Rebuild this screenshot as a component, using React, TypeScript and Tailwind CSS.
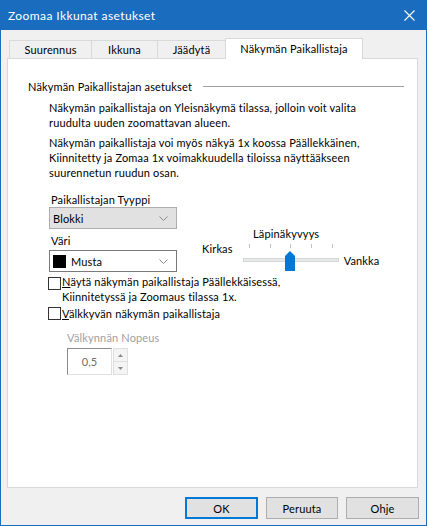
import React from "react";

function Tab({ label, w, selected }: { label: string; w: string; selected?: boolean }) {
  if (selected) {
    return (
      <div className={`${w} h-[21px] relative z-10 bg-white border border-b-0 border-[#d9d9d9] flex items-center justify-center pb-[1px]`}>
        {label}
      </div>
    );
  }
  return (
    <div className={`${w} h-[18px] mt-[2px] bg-[#f0f0f0] border-t border-l border-[#d9d9d9] flex items-center justify-center`}>
      {label}
    </div>
  );
}

function Checkbox() {
  return <div className="w-[13px] h-[13px] border border-[#333333] bg-white shrink-0" />;
}

function Chevron() {
  return (
    <svg width="9" height="5" viewBox="0 0 9 5">
      <path d="M0.5 0.5 L4.5 4.5 L8.5 0.5" stroke="#8a8a8a" fill="none" strokeWidth="1" />
    </svg>
  );
}

export default function App() {
  return (
    <div className="w-[427px] h-[526px] flex flex-col bg-[#1a6cbe] p-px font-['Lato',sans-serif] text-[11px] tracking-[0.15px] leading-[15px] text-black overflow-hidden">
      <div className="h-[29px] shrink-0 flex items-center justify-between text-white pl-[7px] pr-[10px]">
        <span className="text-[12px] tracking-[0.4px]">Zoomaa Ikkunat asetukset</span>
        <svg width="11" height="11" viewBox="0 0 11 11" className="mr-[1px]">
          <path d="M0.5 0.5 L10.5 10.5 M10.5 0.5 L0.5 10.5" stroke="white" strokeWidth="1.1" />
        </svg>
      </div>
      <div className="h-[495px] bg-[#f0f0f0] flex flex-col pl-[6px] pr-[8px] pt-[8px]">
        <div className="h-[20px] flex items-start pl-[2px] shrink-0">
          <Tab label="Suurennus" w="w-[82px]" />
          <Tab label="Ikkuna" w="w-[66px]" />
          <Tab label="Jäädytä" w="w-[68px]" />
          <Tab label="Näkymän Paikallistaja" w="w-[138px]" selected />
        </div>
        <div className="h-[430px] shrink-0 bg-white border border-[#d9d9d9] pt-[20px] pl-[20px] pr-[13px]">
          <div className="flex items-center">
            <span className="whitespace-nowrap">Näkymän Paikallistajan asetukset</span>
            <div className="flex-1 ml-[11px] h-[2px] border-t border-[#a0a0a0] border-b border-b-white" />
          </div>
          <div className="pl-[21px]">
            <p className="mt-[6px] whitespace-nowrap">
              Näkymän paikallistaja on Yleisnäkymä tilassa, jolloin voit valita
              <br />
              ruudulta uuden zoomattavan alueen.
            </p>
            <p className="mt-[5px] whitespace-nowrap">
              Näkymän paikallistaja voi myös näkyä 1x koossa Päällekkäinen,
              <br />
              Kiinnitetty ja Zomaa 1x voimakkuudella tiloissa näyttääkseen
              <br />
              suurennetun ruudun osan.
            </p>
            <div className="flex items-start mt-[12px]">
              <div className="w-[128px] flex flex-col">
                <span className="pl-[2px]">Paikallistajan Tyyppi</span>
                <div className="h-[22px] bg-[#e1e1e1] border border-[#adadad] flex items-center justify-between pl-[3px] pr-[8px]">
                  <span>Blokki</span>
                  <Chevron />
                </div>
                <span className="mt-[4px] pl-[2px]">Väri</span>
                <div className="mt-[2px] h-[22px] bg-white border border-[#7a7a7a] flex items-center justify-between pl-[3px] pr-[8px]">
                  <div className="flex items-center">
                    <div className="w-[13px] h-[13px] bg-black" />
                    <span className="ml-[5px]">Musta</span>
                  </div>
                  <Chevron />
                </div>
              </div>
              <div className="ml-[25px] mt-[34px] flex flex-col">
                <span className="ml-[51px]">Läpinäkyvyys</span>
                <div className="flex items-start">
                  <span>Kirkas</span>
                  <svg width="100" height="30" viewBox="0 0 100 30" className="ml-[8px] mt-[1px]">
                    {[8, 29, 49, 70, 91].map((x) => (
                      <line key={x} x1={x + 0.5} y1="2" x2={x + 0.5} y2="6" stroke="#c4c4c4" strokeWidth="1" />
                    ))}
                    <rect x="2.5" y="16.5" width="95" height="3" fill="#e7eaea" stroke="#d6d6d6" />
                    <path d="M44 29 L44 14 L49 9 L54 14 L54 29 Z" fill="#0078d7" />
                  </svg>
                  <span className="ml-[3px] mt-[12px]">Vankka</span>
                </div>
              </div>
            </div>
            <div className="flex items-start mt-[2px] -ml-[1px]">
              <div className="mt-[3px]">
                <Checkbox />
              </div>
              <span className="ml-[1px] whitespace-nowrap">
                <span className="underline">N</span>äytä näkymän paikallistaja Päällekkäisessä,
                <br />
                Kiinnitetyssä ja Zoomaus tilassa 1x.
              </span>
            </div>
            <div className="flex items-center mt-[2px] -ml-[1px]">
              <Checkbox />
              <span className="ml-[1px] whitespace-nowrap">
                <span className="underline">V</span>älkkyvän näkymän paikallistaja
              </span>
            </div>
            <div className="pl-[18px] mt-[9px] flex flex-col text-[#a0a0a0]">
              <span>Välkynnän Nopeus</span>
              <div className="flex mt-[3px]">
                <div className="w-[45px] h-[27px] border border-t-[#8a8a8a] border-l-[#8a8a8a] border-r-[#e0e0e0] border-b-[#e0e0e0] bg-white flex items-center justify-center text-[#6d6d6d]">
                  0,5
                </div>
                <div className="ml-[1px] w-[15px] h-[27px] flex flex-col">
                  <div className="h-[14px] border border-[#e0e0e0] bg-[#f4f4f4] flex items-center justify-center">
                    <svg width="5" height="3" viewBox="0 0 5 3"><path d="M0 3 L2.5 0 L5 3 Z" fill="#8a8a8a" /></svg>
                  </div>
                  <div className="h-[13px] border border-t-0 border-[#e0e0e0] bg-[#f4f4f4] flex items-center justify-center">
                    <svg width="5" height="3" viewBox="0 0 5 3"><path d="M0 0 L2.5 3 L5 0 Z" fill="#8a8a8a" /></svg>
                  </div>
                </div>
              </div>
            </div>
          </div>
        </div>
        <div className="flex justify-end mt-[9px] gap-[8px] -mr-[1px]">
          <button className="w-[73px] h-[22px] bg-[#e1e1e1] border-2 border-[#0078d7] flex items-center justify-center">OK</button>
          <button className="w-[72px] h-[22px] bg-[#e1e1e1] border border-[#adadad] flex items-center justify-center">Peruuta</button>
          <button className="w-[73px] h-[22px] bg-[#e1e1e1] border border-[#adadad] flex items-center justify-center">Ohje</button>
        </div>
      </div>
    </div>
  );
}
